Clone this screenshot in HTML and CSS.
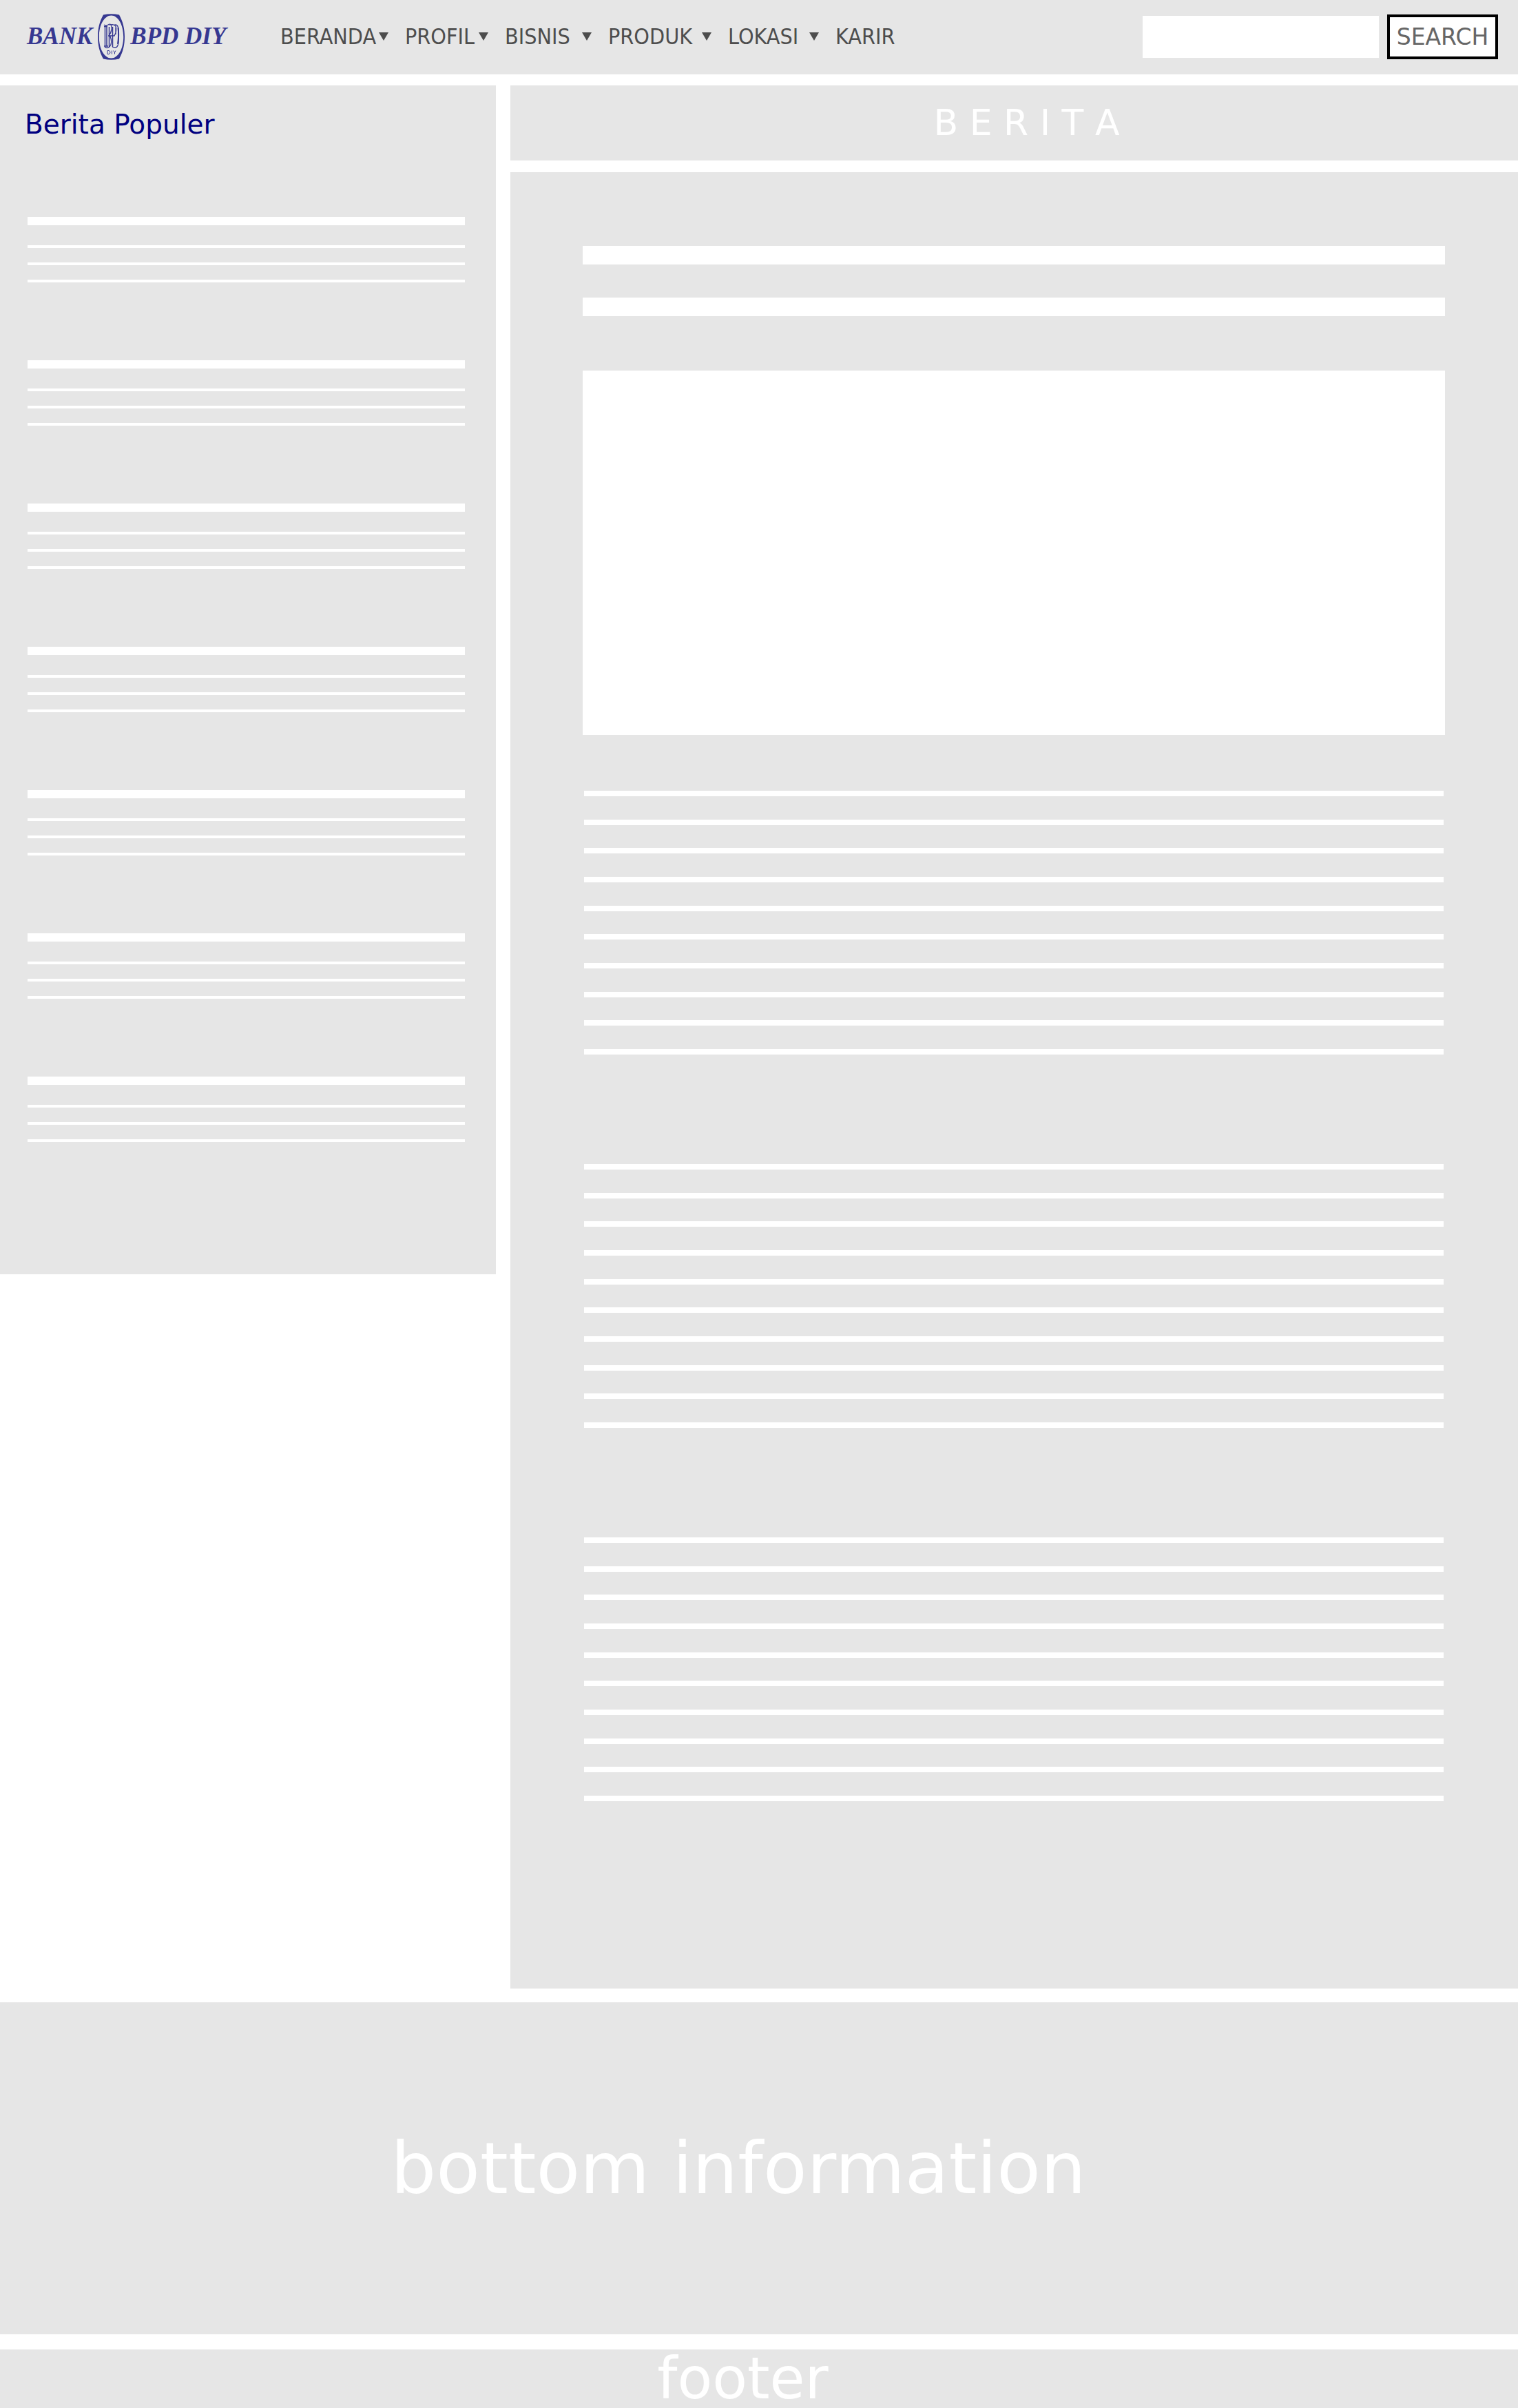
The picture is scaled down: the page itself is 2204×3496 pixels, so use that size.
FILE: index.html
```html
<!DOCTYPE html>
<html lang="id">
<head>
<meta charset="utf-8">
<meta name="viewport" content="width=device-width, initial-scale=1">
<title>Bank BPD DIY - Berita</title>
<link rel="stylesheet" href="styles.css">
</head>
<body>
<header class="topbar">
  <a class="logo" href="#">
    <span>BANK</span>
    <svg class="emblem" viewBox="0 0 39 67" aria-hidden="true">
      <path fill="#363891" fill-rule="evenodd" d="M8 1.500Q19.500-1 31 1.500C36.500 11 39 22 39 33.500S36.500 56 31 65.500Q19.500 68 8 65.500C2.500 56 0 45 0 33.500S2.500 11 8 1.500ZM19.500 2.500C9.500 2.500 1.800 16 1.800 33.500S9.500 64.500 19.500 64.500 37.200 51 37.200 33.500 29.500 2.500 19.500 2.500Z"/>
      <g fill="none" stroke="#363891">
        <path stroke-width="1.500" d="M10.500 18V47M13 18V47M16.500 19V48M21.500 19V48"/>
        <path stroke-width="1.300" d="M9 16Q12 18 15 16T20 16.500Q21 22 18.500 28Q15 32 18 33Q22 42 17 48Q13 51 10 48M9 18.500H14M9 47H15M15 32H22M17 16.500Q23 14 26 18Q28 25 24 32H22M23 16.500Q29 14 30 22V42Q29 50 24 49L21 48M26 20V30"/>
        <path stroke-width="2" d="M29.500 20Q31 31 29 44"/>
        <path stroke-width="1" d="M14 53.500V58.500H16Q18 58 18 56T16 53.500ZM20.500 53.500V58.500M22.500 53.500 24.500 56 26 53.500M24.500 56V58.500"/>
      </g>
    </svg>
    <span>BPD DIY</span>
  </a>
  <nav class="menu" aria-label="Menu utama">
    <a href="#">BERANDA<svg class="caret" viewBox="0 0 14 12" aria-hidden="true"><path d="M0 0H14L7 12Z"/></svg></a>
    <a href="#">PROFIL<svg class="caret" viewBox="0 0 14 12" aria-hidden="true"><path d="M0 0H14L7 12Z"/></svg></a>
    <a href="#">BISNIS<svg class="caret" viewBox="0 0 14 12" aria-hidden="true"><path d="M0 0H14L7 12Z"/></svg></a>
    <a href="#">PRODUK<svg class="caret" viewBox="0 0 14 12" aria-hidden="true"><path d="M0 0H14L7 12Z"/></svg></a>
    <a href="#">LOKASI<svg class="caret" viewBox="0 0 14 12" aria-hidden="true"><path d="M0 0H14L7 12Z"/></svg></a>
    <a href="#">KARIR</a>
  </nav>
  <form class="search">
    <input type="search" aria-label="Cari">
    <button type="submit">SEARCH</button>
  </form>
</header>

<div class="content">
  <aside class="popular">
    <h2>Berita Populer</h2>
    <div class="teasers">
      <div class="teaser"><b></b><i></i><i></i><i></i></div>
      <div class="teaser"><b></b><i></i><i></i><i></i></div>
      <div class="teaser"><b></b><i></i><i></i><i></i></div>
      <div class="teaser"><b></b><i></i><i></i><i></i></div>
      <div class="teaser"><b></b><i></i><i></i><i></i></div>
      <div class="teaser"><b></b><i></i><i></i><i></i></div>
      <div class="teaser"><b></b><i></i><i></i><i></i></div>
    </div>
  </aside>
  <main class="news">
    <h1>B E R I T A</h1>
    <article class="article">
      <div class="headline"><b></b><b></b></div>
      <div class="photo"></div>
      <div class="paragraphs">
        <div class="paragraph"><i></i><i></i><i></i><i></i><i></i><i></i><i></i><i></i><i></i><i></i></div>
        <div class="paragraph"><i></i><i></i><i></i><i></i><i></i><i></i><i></i><i></i><i></i><i></i></div>
        <div class="paragraph"><i></i><i></i><i></i><i></i><i></i><i></i><i></i><i></i><i></i><i></i></div>
      </div>
    </article>
  </main>
</div>

<section class="bottom-info"><p>bottom information</p></section>
<footer class="footer"><p>footer</p></footer>
</body>
</html>
```
FILE: styles.css
```css
* { box-sizing: border-box; }

body {
  margin: 0;
  background: #fff;
  color: #fff;
  font-family: "DejaVu Sans", Verdana, sans-serif;
}

h1, h2, p { margin: 0; font-weight: 400; }

/* Header */
.topbar {
  display: flex;
  align-items: center;
  height: 108px;
  padding: 0 29px 2px 39px;
  background: #e6e6e6;
}

.logo {
  display: flex;
  align-items: center;
  gap: 8px;
  width: 368px;
  color: #363891;
  font: italic bold 35px/40px "Liberation Serif", serif;
  text-decoration: none;
  white-space: nowrap;
}

.emblem { width: 39px; height: 67px; }

.menu {
  display: grid;
  grid-template-columns: 181px 145px 150px 174px 156px auto;
}

.menu a {
  display: flex;
  align-items: center;
  justify-content: space-between;
  padding-right: 24px;
  color: #4d4d4d;
  font: 32px/40px "DejaVu Sans Condensed", "DejaVu Sans", sans-serif;
  font-stretch: condensed;
  text-decoration: none;
}

.caret { width: 14px; height: 12px; fill: #4d4d4d; }

.search {
  display: flex;
  align-items: center;
  gap: 12px;
  margin-left: auto;
}

.search input {
  width: 343px;
  height: 61px;
  padding: 0 12px;
  border: 0;
  background: #fff;
  font: inherit;
  font-size: 33px;
}

.search button {
  width: 161px;
  height: 65px;
  padding: 0;
  border: 4px solid #000;
  background: #fff;
  color: #666;
  font: inherit;
  font-size: 33px;
}

/* Two-column content */
.content {
  display: grid;
  grid-template-columns: 720fr 1463fr;
  gap: 21px;
  align-items: start;
  padding: 16px 0 20px;
}

.popular {
  padding: 32px 45px 192px 36px;
  background: #e6e6e6;
}

.popular h2 {
  color: #000080;
  font-size: 39px;
  line-height: 50px;
}

.teasers {
  display: grid;
  gap: 113px;
  margin-top: 109px;
  padding-left: 4px;
}

.teaser { display: grid; gap: 21px; }
.teaser b { height: 12px; margin-bottom: 8px; background: #fff; }
.teaser i { height: 4px; background: #fff; }

.news { display: grid; gap: 17px; }

.news h1 {
  padding: 24px 0 24px 36px;
  background: #e6e6e6;
  font-size: 52px;
  line-height: 61px;
  text-align: center;
}

.article {
  padding: 107px 106px 272px 105px;
  background: #e6e6e6;
}

.headline { display: grid; gap: 48px; }
.headline b { height: 27px; background: #fff; }

.photo {
  height: 529px;
  margin-top: 79px;
  background: #fff;
}

.paragraphs {
  display: grid;
  gap: 159px;
  margin-top: 81px;
  padding: 0 2px;
}

.paragraph {
  display: flex;
  flex-direction: column;
  justify-content: space-between;
  height: 383px;
}

.paragraph i { height: 8px; background: #fff; }

/* Page end */
.bottom-info {
  padding: 181px 60px 181px 0;
  background: #e6e6e6;
  font-size: 104px;
  line-height: 120px;
  text-align: center;
}

.footer {
  margin-top: 22px;
  padding-right: 47px;
  background: #e6e6e6;
  font-size: 83px;
  line-height: 85px;
  text-align: center;
}
```
